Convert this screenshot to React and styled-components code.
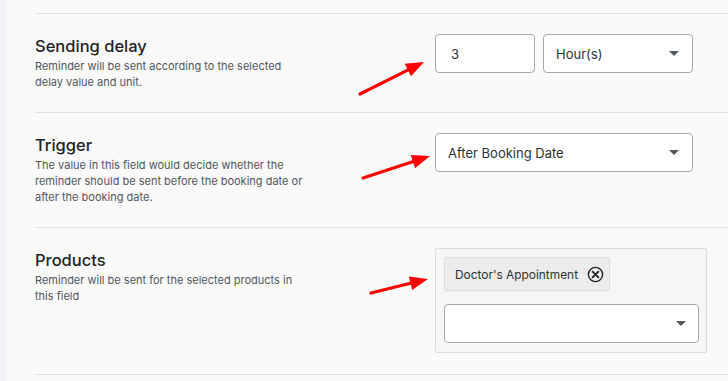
import React from 'react'
import styled, { createGlobalStyle } from 'styled-components'

const GlobalStyle = createGlobalStyle`
  html, body {
    margin: 0;
    padding: 0;
    background: #fafaf9;
  }
  body {
    font-family: Inter, "Noto Sans", "Liberation Sans", sans-serif;
    -webkit-font-smoothing: antialiased;
  }
`;

const rows = [
  {
    title: 'Sending delay',
    desc: 'Reminder will be sent according to the selected delay value and unit.',
    field: 'delay',
  },
  {
    title: 'Trigger',
    desc: 'The value in this field would decide whether the reminder should be sent before the booking date or after the booking date.',
    field: 'trigger',
  },
  {
    title: 'Products',
    desc: 'Reminder will be sent for the selected products in this field',
    field: 'products',
  },
];

const arrows = [
  { from: [360, 94], to: [424, 62] },
  { from: [363, 178], to: [430, 156] },
  { from: [371, 293], to: [428, 279] },
];

const Arrow = ({ from, to }) => {
  const dx = to[0] - from[0];
  const dy = to[1] - from[1];
  const len = Math.hypot(dx, dy);
  const ux = dx / len;
  const uy = dy / len;
  const head = 18;
  const half = 7;
  const bx = to[0] - head * ux;
  const by = to[1] - head * uy;
  const pts = [
    `${to[0]},${to[1]}`,
    `${bx - uy * half},${by + ux * half}`,
    `${bx + uy * half},${by - ux * half}`,
  ].join(' ');
  return (
    <g>
      <line x1={from[0]} y1={from[1]} x2={bx + ux * 2} y2={by + uy * 2} stroke="#ff0000" strokeWidth="3.2" strokeLinecap="round" />
      <polygon points={pts} fill="#ff0000" />
    </g>
  );
};

const CloseIcon = () => (
  <svg width="17" height="17" viewBox="0 0 16 16">
    <circle cx="8" cy="8" r="6.7" fill="none" stroke="#1d2327" strokeWidth="1.3" />
    <path d="M5.3 5.3 L10.7 10.7 M10.7 5.3 L5.3 10.7" stroke="#1d2327" strokeWidth="1.7" strokeLinecap="round" />
  </svg>
);

const App = () => {
  const renderField = (field) => {
    if (field === 'delay') {
      return (
        <FieldRow>
          <TextInput $width={100}>3</TextInput>
          <Select $width={150}>
            <span>Hour(s)</span>
            <Caret />
          </Select>
        </FieldRow>
      );
    }
    if (field === 'trigger') {
      return (
        <Select $width={258}>
          <span>After Booking Date</span>
          <Caret />
        </Select>
      );
    }
    return (
      <ProductBox>
        <Chip>
          <span>Doctor's Appointment</span>
          <CloseIcon />
        </Chip>
        <Select $width={255} $inner>
          <span />
          <Caret />
        </Select>
      </ProductBox>
    );
  };

  return (
    <>
      <GlobalStyle />
      <Page>
        <SideStrip />
        <Main>
          {rows.map((row) => (
            <Row key={row.title}>
              <Info>
                <Title>{row.title}</Title>
                <Desc>{row.desc}</Desc>
              </Info>
              <Control>{renderField(row.field)}</Control>
            </Row>
          ))}
        </Main>
        <Overlay width="728" height="381" viewBox="0 0 728 381">
          {arrows.map((a, i) => (
            <Arrow key={i} from={a.from} to={a.to} />
          ))}
        </Overlay>
      </Page>
    </>
  );
};

export default App

const Page = styled.div`
  position: relative;
  display: flex;
  width: 728px;
  height: 381px;
  overflow: hidden;
  background: #fafaf9;
`;

const SideStrip = styled.div`
  width: 7px;
  flex-shrink: 0;
  background: #f3f3f9;
`;

const Main = styled.div`
  flex: 1;
  padding: 13px 0 0 28px;
`;

const Row = styled.div`
  display: grid;
  grid-template-columns: 400px 1fr;
  border-top: 1px solid #e1e1e1;
  padding: 20px 0 22px;
  &:last-child {
    border-bottom: 1px solid #e1e1e1;
    padding-bottom: 21px;
  }
`;

const Info = styled.div`
  display: flex;
  flex-direction: column;
`;

const Title = styled.h3`
  margin: 0;
  font-size: 16.5px;
  line-height: 24px;
  font-weight: 500;
  color: #1d2327;
`;

const Desc = styled.p`
  margin: 0;
  max-width: 271px;
  font-size: 11px;
  line-height: 16px;
  color: #50575e;
`;

const Control = styled.div`
  display: flex;
  align-items: flex-start;
`;

const FieldRow = styled.div`
  display: flex;
  gap: 8px;
`;

const TextInput = styled.div`
  box-sizing: border-box;
  width: ${(p) => p.$width}px;
  height: 39px;
  display: flex;
  align-items: center;
  padding: 0 15px;
  background: #fff;
  border: 1px solid #a7aaad;
  border-radius: 4px;
  font-size: 13px;
  color: #2c3338;
`;

const Select = styled.div`
  box-sizing: border-box;
  width: ${(p) => p.$width}px;
  height: 39px;
  display: flex;
  align-items: center;
  justify-content: space-between;
  padding: 0 ${(p) => (p.$inner ? 12 : 13)}px 0 12px;
  background: #fff;
  border: 1px solid #a7aaad;
  border-radius: 4px;
  font-size: 13px;
  color: #2c3338;
`;

const Caret = styled.span`
  width: 0;
  height: 0;
  border-left: 5.5px solid transparent;
  border-right: 5.5px solid transparent;
  border-top: 5.5px solid #50575e;
`;

const ProductBox = styled.div`
  box-sizing: border-box;
  width: 272px;
  display: flex;
  flex-direction: column;
  align-items: flex-start;
  gap: 13px;
  padding: 8px 7px 9px 8px;
  background: #f6f6f6;
  border: 1px solid #dcdcde;
  border-radius: 2px;
`;

const Chip = styled.div`
  box-sizing: border-box;
  height: 34px;
  display: flex;
  align-items: center;
  gap: 9px;
  padding: 0 5px 0 10px;
  background: #ececec;
  border: 1px solid #dcdcde;
  border-radius: 2px;
  font-size: 11.9px;
  color: #2c3338;
`;

const Overlay = styled.svg`
  position: absolute;
  top: 0;
  left: 0;
  pointer-events: none;
`;
